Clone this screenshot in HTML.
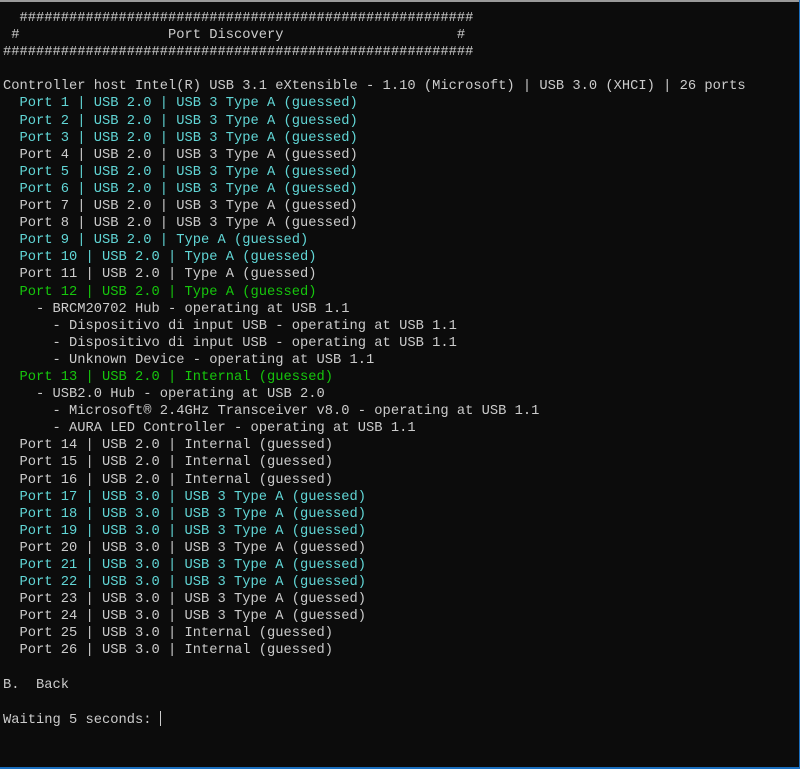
<!DOCTYPE html>
<html><head><meta charset="utf-8"><style>
html,body{margin:0;padding:0;background:#0c0c0c;}
body{width:800px;height:769px;overflow:hidden;position:relative;}
.top{position:absolute;left:0;top:0;width:800px;height:2px;background:#9a9a9a;}
.bot{position:absolute;left:0;bottom:0;width:800px;height:2px;background:#1a6fc0;}
.rt{position:absolute;right:0;top:0;width:1px;height:769px;background:#1a6fc0;}
pre{position:absolute;left:3px;top:10px;margin:0;font-family:"Liberation Mono",monospace;font-size:13.75px;line-height:17.1px;color:#cccccc;}
.c{color:#61d6d6}.g{color:#16c60c}
.cur{display:inline-block;width:1px;height:15px;background:#cccccc;vertical-align:-3px;}
</style></head><body>
<div class="top"></div><div class="rt"></div><div class="bot"></div>
<pre>  #######################################################
 #                  Port Discovery                     #
#########################################################

Controller host Intel(R) USB 3.1 eXtensible - 1.10 (Microsoft) | USB 3.0 (XHCI) | 26 ports
<span class="c">  Port 1 | USB 2.0 | USB 3 Type A (guessed)</span>
<span class="c">  Port 2 | USB 2.0 | USB 3 Type A (guessed)</span>
<span class="c">  Port 3 | USB 2.0 | USB 3 Type A (guessed)</span>
  Port 4 | USB 2.0 | USB 3 Type A (guessed)
<span class="c">  Port 5 | USB 2.0 | USB 3 Type A (guessed)</span>
<span class="c">  Port 6 | USB 2.0 | USB 3 Type A (guessed)</span>
  Port 7 | USB 2.0 | USB 3 Type A (guessed)
  Port 8 | USB 2.0 | USB 3 Type A (guessed)
<span class="c">  Port 9 | USB 2.0 | Type A (guessed)</span>
<span class="c">  Port 10 | USB 2.0 | Type A (guessed)</span>
  Port 11 | USB 2.0 | Type A (guessed)
<span class="g">  Port 12 | USB 2.0 | Type A (guessed)</span>
    - BRCM20702 Hub - operating at USB 1.1
      - Dispositivo di input USB - operating at USB 1.1
      - Dispositivo di input USB - operating at USB 1.1
      - Unknown Device - operating at USB 1.1
<span class="g">  Port 13 | USB 2.0 | Internal (guessed)</span>
    - USB2.0 Hub - operating at USB 2.0
      - Microsoft® 2.4GHz Transceiver v8.0 - operating at USB 1.1
      - AURA LED Controller - operating at USB 1.1
  Port 14 | USB 2.0 | Internal (guessed)
  Port 15 | USB 2.0 | Internal (guessed)
  Port 16 | USB 2.0 | Internal (guessed)
<span class="c">  Port 17 | USB 3.0 | USB 3 Type A (guessed)</span>
<span class="c">  Port 18 | USB 3.0 | USB 3 Type A (guessed)</span>
<span class="c">  Port 19 | USB 3.0 | USB 3 Type A (guessed)</span>
  Port 20 | USB 3.0 | USB 3 Type A (guessed)
<span class="c">  Port 21 | USB 3.0 | USB 3 Type A (guessed)</span>
<span class="c">  Port 22 | USB 3.0 | USB 3 Type A (guessed)</span>
  Port 23 | USB 3.0 | USB 3 Type A (guessed)
  Port 24 | USB 3.0 | USB 3 Type A (guessed)
  Port 25 | USB 3.0 | Internal (guessed)
  Port 26 | USB 3.0 | Internal (guessed)

B.  Back

Waiting 5 seconds: <span class="cur"></span></pre>
</body></html>
